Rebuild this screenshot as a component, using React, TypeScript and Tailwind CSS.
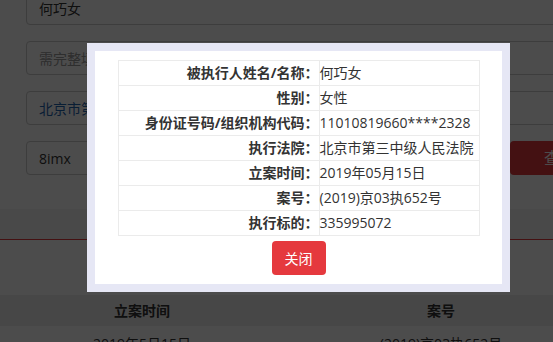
const rows: [string, string][] = [
  ["被执行人姓名/名称：", "何巧女"],
  ["性别：", "女性"],
  ["身份证号码/组织机构代码：", "11010819660****2328"],
  ["执行法院：", "北京市第三中级人民法院"],
  ["立案时间：", "2019年05月15日"],
  ["案号：", "(2019)京03执652号"],
  ["执行标的：", "335995072"],
]

export default function App() {
  return (
    <div className="relative w-[553px] h-[342px] overflow-hidden bg-white font-['Open_Sans','Noto_Sans_CJK_SC',sans-serif] text-[#333]">
      {/* page behind the dialog */}
      <div className="w-[640px]">
        <div className="-mt-[9px] flex flex-col gap-4 pl-[26px]">
          <div className="flex h-[34px] w-[620px] items-center rounded-[4px] border border-[#ccc] px-3 text-[14px]">
            何巧女
          </div>
          <div className="flex h-[34px] w-[620px] items-center rounded-[4px] border border-[#ccc] px-3 text-[14px] text-[#999]">
            需完整填写身份证号码/组织机构代码
          </div>
          <div className="flex h-[34px] w-[620px] items-center rounded-[4px] border border-[#ccc] px-3 text-[14px] text-[#1f64b0]">
            北京市第三中级人民法院
          </div>
          <div className="flex items-center gap-[10px]">
            <div className="flex h-[34px] w-[474px] items-center rounded-[4px] border border-[#ccc] px-3 text-[14px]">
              8imx
            </div>
            <div className="flex h-[34px] w-[100px] items-center justify-center rounded-[4px] bg-[#e4393c] text-[16px] text-white">
              查询
            </div>
          </div>
        </div>
        <div className="h-[34px]" />
        <div className="h-[31px] border-b border-[#e4393c] bg-[#f5f5f5]" />
        <div className="h-[55px]" />
        <div className="grid h-[31px] grid-cols-[284px_314px] items-center bg-[#eee] text-[14px] font-bold">
          <div className="text-center">立案时间</div>
          <div className="text-center">案号</div>
        </div>
        <div className="grid grid-cols-[284px_314px] pt-[8px] text-[14px] leading-[20px]">
          <div className="text-center">2019年5月15日</div>
          <div className="text-center">(2019)京03执652号</div>
        </div>
      </div>

      {/* mask */}
      <div className="absolute inset-0 bg-black/70" />

      {/* dialog */}
      <div className="absolute left-[87px] top-[43px] w-[423px] border-8 border-[#e6e7f5] bg-white px-[22px] pt-[9px] pb-[9px]">
        <table className="mx-auto w-[362px] border-collapse text-[14px]">
          <tbody>
            {rows.map(([label, value]) => (
              <tr key={label}>
                <td className="h-[25px] w-[201px] border border-[#ebebeb] p-0 text-right font-bold leading-[24px]">
                  {label}
                </td>
                <td className="h-[25px] border border-[#ebebeb] p-0 leading-[24px]">
                  {value}
                </td>
              </tr>
            ))}
          </tbody>
        </table>
        <div className="mt-[5px] flex justify-center">
          <button className="h-[34px] w-[54px] rounded-[4px] bg-[#e5393e] text-[14px] text-white">
            关闭
          </button>
        </div>
      </div>
    </div>
  )
}
